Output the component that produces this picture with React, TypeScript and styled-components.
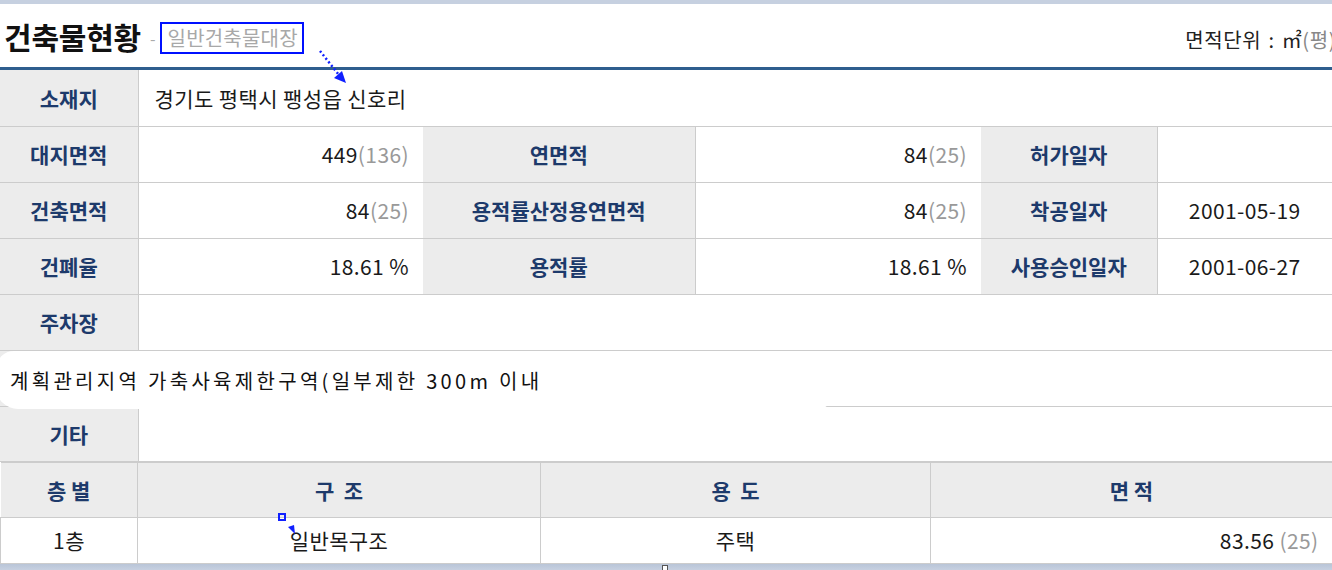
import React from "react";
import styled, { createGlobalStyle } from "styled-components";

const GlobalStyle = createGlobalStyle`
  html, body {
    margin: 0;
    padding: 0;
    background: #ffffff;
  }
  body {
    font-family: "Noto Sans CJK KR", "Noto Sans", sans-serif;
  }
`;

const Page = styled.div`
  position: relative;
  width: 1332px;
  height: 570px;
  overflow: hidden;
  background: #ffffff;
  border-top: 4px solid #c6d0e0;
  box-sizing: border-box;
`;

const Header = styled.div`
  display: flex;
  align-items: flex-end;
  justify-content: space-between;
  height: 66px;
  border-bottom: 3px solid #2f5e8e;
  box-sizing: border-box;
  padding: 0 0 12px 4px;
`;

const TitleGroup = styled.div`
  display: flex;
  align-items: center;
  gap: 4px;
`;

const Title = styled.h1`
  margin: 0;
  font-size: 30px;
  font-weight: 700;
  color: #111;
  letter-spacing: -0.2px;
  line-height: 38px;
`;

const Dash = styled.span`
  color: #aaa;
  font-size: 16px;
  margin: 4px 0 0 5px;
`;

const SubTitle = styled.span`
  border: 2px solid #0010ff;
  color: #a8a8a8;
  font-size: 20px;
  line-height: 28px;
  padding: 0 4px 0 6px;
  margin-top: 4px;
  letter-spacing: 0.2px;
`;

const Unit = styled.div`
  font-size: 20px;
  color: #222;
  letter-spacing: 0.6px;
  word-spacing: 2px;
  margin-right: -4px;
  margin-bottom: 1px;
  span {
    color: #888;
  }
`;

const Table = styled.table`
  width: 1332px;
  border-collapse: collapse;
  table-layout: fixed;
`;

const Row = styled.tr<{ $h?: number }>`
  height: ${(p) => p.$h ?? 56}px;
`;

const Th = styled.th`
  background: #ececec;
  color: #1d3a6b;
  font-size: 21px;
  font-weight: 700;
  text-align: center;
  border: 1px solid #cccccc;
  border-left: none;
  padding: 0;
  white-space: pre;
`;

const Td = styled.td<{ $align?: "left" | "right" | "center" }>`
  border: 1px solid #cccccc;
  border-right: none;
  font-size: 21px;
  color: #1a1a1a;
  text-align: ${(p) => p.$align ?? "left"};
  padding: ${(p) =>
    p.$align === "right" ? "0 14px 0 0" : p.$align === "center" ? "0" : "0 0 0 16px"};
  background: #fff;
  letter-spacing: 0.4px;
`;

const Py = styled.span`
  color: #999;
`;

const FirstRowTh = styled(Th)`
  border-top: none;
`;
const FirstRowTd = styled(Td)`
  border-top: none;
`;

const Note = styled.div`
  position: absolute;
  left: -4px;
  top: 347px;
  width: 836px;
  height: 58px;
  background: #ffffff;
  border-radius: 18px 6px 14px 22px;
  display: flex;
  align-items: center;
  padding-left: 14px;
  box-sizing: border-box;
  font-family: "Noto Sans CJK KR", sans-serif;
  font-size: 20px;
  letter-spacing: 3.3px;
  color: #111;
`;

const Marker = styled.svg`
  position: absolute;
  overflow: visible;
`;

const Handle = styled.div`
  position: absolute;
  left: 662px;
  top: 561px;
  width: 4px;
  height: 4px;
  border: 1px solid #555;
  background: #fff;
`;

const BottomBand = styled.div`
  height: 10px;
  background: linear-gradient(#b9c5d8, #d0d8e6);
`;

const Val = ({ main, py }: { main: string; py?: string }) => (
  <>
    {main}
    {py && <Py>({py})</Py>}
  </>
);

export default function App() {
  return (
    <>
      <GlobalStyle />
      <Page>
        <Header>
          <TitleGroup>
            <Title>건축물현황</Title>
            <Dash>-</Dash>
            <SubTitle>일반건축물대장</SubTitle>
          </TitleGroup>
          <Unit>
            면적단위 : ㎡<span>(평)</span>
          </Unit>
        </Header>

        <Table>
          <colgroup>
            <col style={{ width: 138 }} />
            <col style={{ width: 285 }} />
            <col style={{ width: 272 }} />
            <col style={{ width: 286 }} />
            <col style={{ width: 176 }} />
            <col style={{ width: 175 }} />
          </colgroup>
          <tbody>
            <Row>
              <FirstRowTh>소재지</FirstRowTh>
              <FirstRowTd colSpan={5}>경기도 평택시 팽성읍 신호리</FirstRowTd>
            </Row>
            <Row>
              <Th>대지면적</Th>
              <Td $align="right">
                <Val main="449" py="136" />
              </Td>
              <Th>연면적</Th>
              <Td $align="right">
                <Val main="84" py="25" />
              </Td>
              <Th>허가일자</Th>
              <Td $align="center"></Td>
            </Row>
            <Row>
              <Th>건축면적</Th>
              <Td $align="right">
                <Val main="84" py="25" />
              </Td>
              <Th>용적률산정용연면적</Th>
              <Td $align="right">
                <Val main="84" py="25" />
              </Td>
              <Th>착공일자</Th>
              <Td $align="center">2001-05-19</Td>
            </Row>
            <Row>
              <Th>건폐율</Th>
              <Td $align="right">18.61 %</Td>
              <Th>용적률</Th>
              <Td $align="right">18.61 %</Td>
              <Th>사용승인일자</Th>
              <Td $align="center">2001-06-27</Td>
            </Row>
            <Row>
              <Th>주차장</Th>
              <Td colSpan={5}></Td>
            </Row>
            <Row>
              <Th></Th>
              <Td colSpan={5}></Td>
            </Row>
            <Row $h={55}>
              <Th>기타</Th>
              <Td colSpan={5}></Td>
            </Row>
          </tbody>
        </Table>

        <Table>
          <colgroup>
            <col style={{ width: 137 }} />
            <col style={{ width: 403 }} />
            <col style={{ width: 390 }} />
            <col style={{ width: 402 }} />
          </colgroup>
          <tbody>
            <Row $h={55}>
              <Th>층 별</Th>
              <Th>구  조</Th>
              <Th>용  도</Th>
              <Th>면 적</Th>
            </Row>
            <Row $h={46}>
              <Td $align="center">1층</Td>
              <Td $align="center">일반목구조</Td>
              <Td $align="center">주택</Td>
              <Td $align="right">
                83.56 <Py>(25)</Py>
              </Td>
            </Row>
          </tbody>
        </Table>

        <BottomBand />

        <Note>계획관리지역 가축사육제한구역(일부제한 300m 이내</Note>

        <Marker style={{ left: 318, top: 43 }} width="30" height="40">
          <line
            x1="2"
            y1="4"
            x2="21"
            y2="28"
            stroke="#1020ff"
            strokeWidth="2.5"
            strokeDasharray="2 2.5"
          />
          <polygon points="28,36 16,31 24,24" fill="#1020ff" />
        </Marker>

        <Marker style={{ left: 278, top: 509 }} width="20" height="22">
          <rect x="1" y="1" width="6" height="6" fill="none" stroke="#1020ff" strokeWidth="2" />
          <polygon points="17,21 10,14 16,12" fill="#1020ff" />
        </Marker>

        <Handle />
      </Page>
    </>
  );
}
